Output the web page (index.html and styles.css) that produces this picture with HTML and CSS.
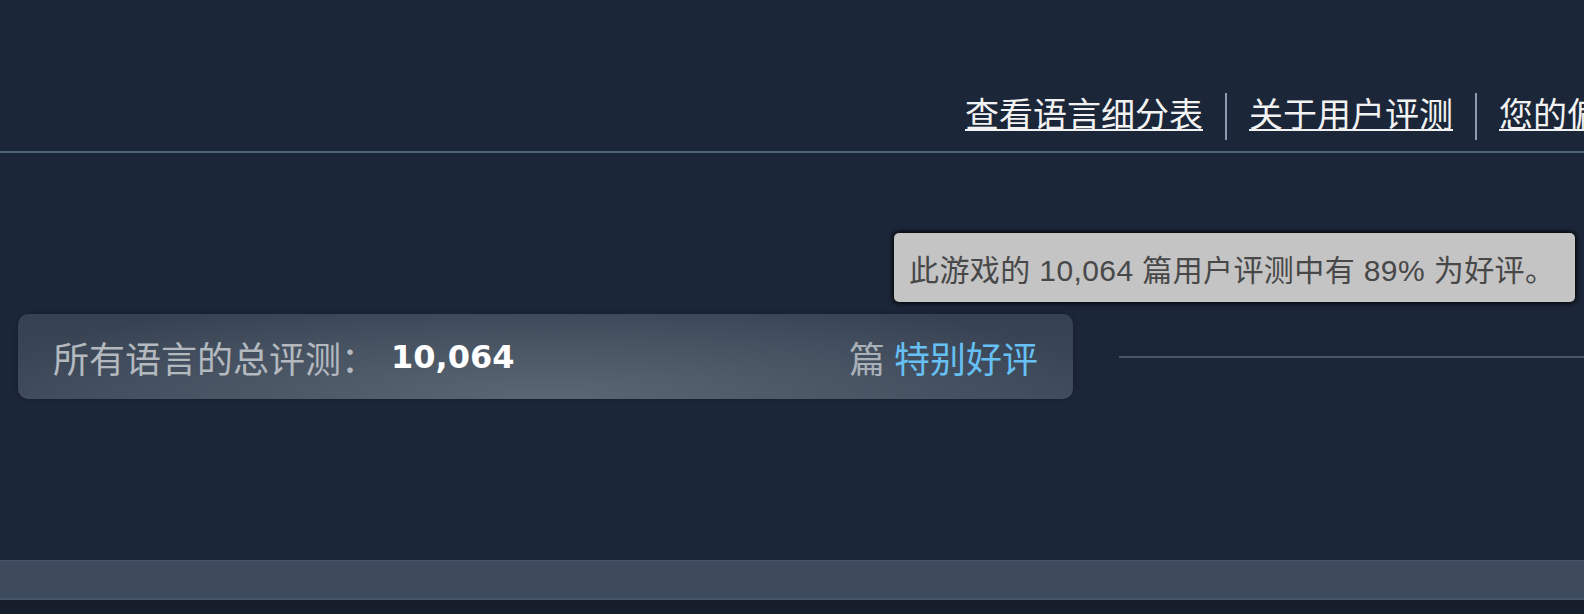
FILE: index.html
```html
<!DOCTYPE html>
<html lang="zh-CN">
<head>
<meta charset="utf-8">
<title>用户评测</title>
<link rel="stylesheet" href="styles.css">
</head>
<body>
<div class="page">
  <header class="review-nav">
    <a class="nav-link" href="#">查看语言细分表</a>
    <span class="nav-sep"></span>
    <a class="nav-link" href="#">关于用户评测</a>
    <span class="nav-sep"></span>
    <a class="nav-link" href="#">您的偏好</a>
  </header>

  <section class="summary-area">
    <div class="summary-row">
      <div class="summary-bar">
        <div class="summary-left">
          <span class="summary-label">所有语言的总评测：</span>
          <span class="summary-count">10,064</span>
        </div>
        <div class="summary-right">
          <span class="summary-unit">篇</span>
          <span class="summary-rating">特别好评</span>
        </div>
      </div>
      <div class="summary-rule"></div>
    </div>
    <div class="tooltip">此游戏的 10,064 篇用户评测中有 89% 为好评。</div>
  </section>

  <div class="footer-bar"></div>
  <div class="footer-bottom"></div>
</div>
</body>
</html>
```

FILE: styles.css
```css
html, body {
  margin: 0;
  padding: 0;
  background: #1b2638;
}

.page {
  width: 1584px;
  height: 614px;
  overflow: hidden;
  font-family: "Noto Sans CJK SC", "Liberation Sans", sans-serif;
}

.review-nav {
  box-sizing: border-box;
  height: 153px;
  padding: 93px 0 0 965px;
  display: flex;
  align-items: flex-start;
  gap: 22px;
  border-bottom: 2px solid #4f6377;
  white-space: nowrap;
}

.nav-link {
  flex-shrink: 0;
  color: #f2f2f2;
  font-size: 34px;
  line-height: 40px;
  text-decoration: underline;
  text-decoration-thickness: 2px;
  text-underline-offset: 2px;
}

.nav-sep {
  flex-shrink: 0;
  width: 2px;
  height: 47px;
  background: #8c9cb0;
}

.summary-area {
  position: relative;
  box-sizing: border-box;
  height: 407px;
  padding: 161px 0 0 18px;
}

.summary-row {
  display: flex;
  align-items: center;
  gap: 46px;
}

.summary-bar {
  box-sizing: border-box;
  width: 1055px;
  height: 85px;
  padding: 0 35px;
  border-radius: 10px;
  display: flex;
  align-items: center;
  justify-content: space-between;
  background:
    radial-gradient(ellipse 55% 130% at 50% 100%, rgba(98, 110, 122, 0.8) 0%, rgba(98, 110, 122, 0) 100%),
    linear-gradient(to bottom, #364252 0%, #3d4859 100%);
  box-shadow: 0 0 4px rgba(0, 0, 0, 0.25);
}

.summary-left,
.summary-right {
  display: flex;
  align-items: center;
}

.summary-label {
  color: #b3b9bf;
  font-size: 36px;
  line-height: 44px;
}

.summary-count {
  margin-left: 14px;
  color: #ffffff;
  font-family: "DejaVu Sans", "Liberation Sans", sans-serif;
  font-weight: bold;
  font-size: 32px;
  line-height: 44px;
}

.summary-unit {
  color: #a9b0b7;
  font-size: 36px;
  line-height: 44px;
}

.summary-rating {
  margin-left: 9px;
  color: #66c0f4;
  font-size: 36px;
  line-height: 44px;
}

.summary-rule {
  flex: 1;
  height: 2px;
  background: #4a5567;
}

.tooltip {
  position: absolute;
  left: 894px;
  top: 80px;
  box-sizing: border-box;
  width: 681px;
  height: 69px;
  padding-left: 15px;
  display: flex;
  align-items: center;
  border-radius: 5px;
  background: #c4c4c4;
  color: #484849;
  font-family: "Liberation Sans", "Noto Sans CJK SC", sans-serif;
  font-size: 30px;
  letter-spacing: 0.4px;
  white-space: nowrap;
  box-shadow: 0 0 5px 1px #000000;
}

.footer-bar {
  box-sizing: border-box;
  height: 40px;
  background: #3d4a5b;
  border-top: 1px solid #46546a;
  border-bottom: 2px solid #485669;
}

.footer-bottom {
  height: 14px;
  background: #151e2a;
}
```
